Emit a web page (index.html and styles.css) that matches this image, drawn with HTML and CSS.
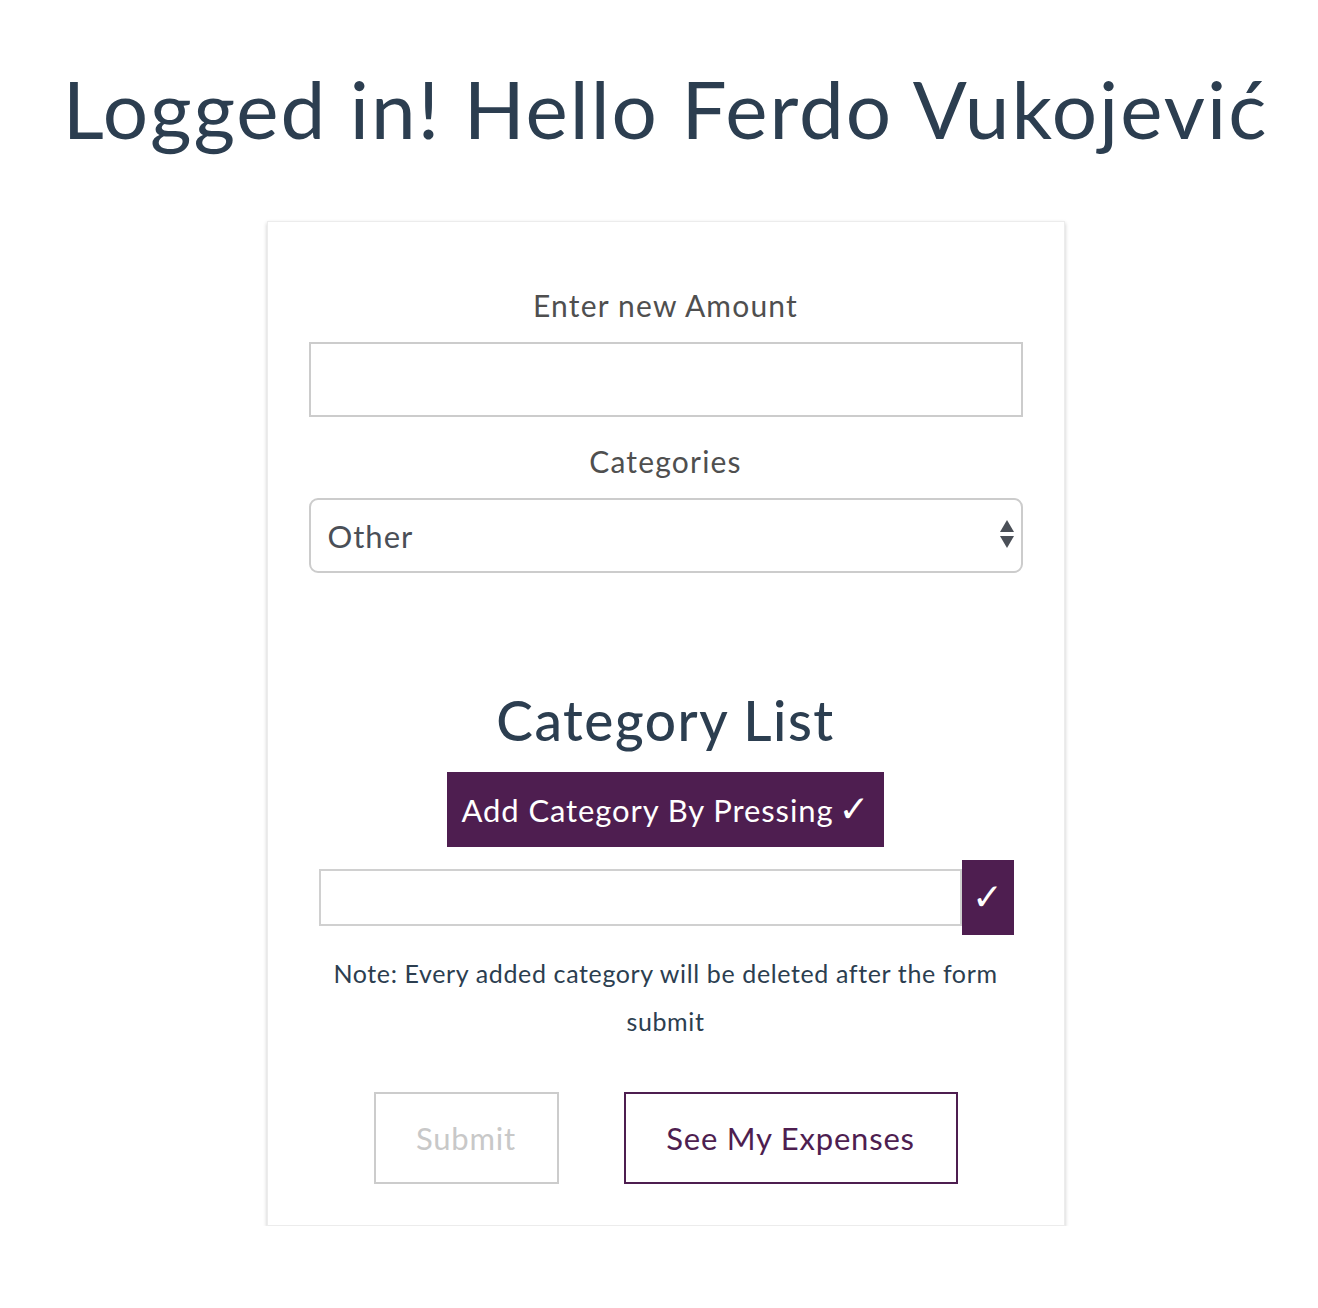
FILE: index.html
```html
<!DOCTYPE html>
<html lang="en">
<head>
<meta charset="utf-8">
<title>Expenses</title>
<link rel="stylesheet" href="styles.css">
</head>
<body>
<div class="page">
  <h1 class="title">Logged in! Hello Ferdo Vukojević</h1>
  <div class="card">
    <label class="label label-first" for="amount">Enter new Amount</label>
    <input class="field" id="amount" type="text">
    <label class="label" for="cat">Categories</label>
    <div class="select-wrap">
      <select class="select" id="cat">
        <option>Other</option>
      </select>
      <svg class="select-arrows" width="16" height="30" viewBox="0 0 16 30" aria-hidden="true">
        <polygon points="8,0 15,12 1,12" fill="#4a4f57"/>
        <polygon points="1,16 15,16 8,28" fill="#4a4f57"/>
      </svg>
    </div>
    <h2 class="list-title">Category List</h2>
    <div class="add-banner">Add Category By Pressing <span class="tick">✓</span></div>
    <div class="add-row">
      <input class="add-input" type="text">
      <button class="add-btn" type="button"><span class="tick">✓</span></button>
    </div>
    <p class="note">Note: Every added category will be deleted after the form submit</p>
    <div class="actions">
      <button class="btn btn-disabled" type="button" disabled>Submit</button>
      <button class="btn btn-primary" type="button">See My Expenses</button>
    </div>
  </div>
</div>
</body>
</html>
```

FILE: styles.css
```css
html, body {
  margin: 0;
  padding: 0;
  background: #fff;
}

body {
  font-family: Lato, "Open Sans", "Liberation Sans", sans-serif;
  color: #2c3e50;
}

.page {
  padding-left: 13px;
  display: flex;
  flex-direction: column;
  align-items: center;
}

.title {
  margin: 56px 0 0;
  font-size: 80px;
  line-height: 104px;
  font-weight: 400;
  letter-spacing: 2px;
  color: #2c3e50;
  white-space: nowrap;
}

.card {
  box-sizing: border-box;
  width: 798px;
  margin-top: 61px;
  padding: 40px 41px 41px;
  border: 1px solid #ececec;
  box-shadow: 0 2px 4px rgba(0, 0, 0, 0.22);
  display: flex;
  flex-direction: column;
  align-items: stretch;
  text-align: center;
}

.label {
  display: block;
  font-size: 30px;
  line-height: 45px;
  letter-spacing: 1.2px;
  color: #4f4f4f;
  margin-top: 22px;
  margin-bottom: 14px;
}

.label-first {
  margin-top: 21px;
}

.field {
  box-sizing: border-box;
  height: 75px;
  width: 100%;
  border: 2px solid #cccccc;
  border-radius: 0;
  margin: 0;
  padding: 0 16px;
  font: inherit;
  font-size: 30px;
  outline: none;
}

.select-wrap {
  position: relative;
}

.select {
  box-sizing: border-box;
  display: block;
  width: 100%;
  height: 75px;
  margin: 0;
  padding: 0 17px;
  border: 2px solid #cccccc;
  border-radius: 9px;
  background: #fff;
  font-family: inherit;
  font-size: 31px;
  letter-spacing: 1px;
  color: #4a4f57;
  -webkit-appearance: none;
  appearance: none;
  outline: none;
}

.select-arrows {
  position: absolute;
  right: 8px;
  top: 22px;
  pointer-events: none;
}

.list-title {
  margin: 114px 0 0;
  font-size: 55px;
  line-height: 66px;
  font-weight: 500;
  letter-spacing: 1.5px;
  color: #2c3e50;
}

.add-banner {
  align-self: center;
  margin-top: 19px;
  height: 75px;
  padding: 0 15px;
  display: flex;
  align-items: center;
  gap: 5px;
  background: #4e1e50;
  color: #fff;
  font-size: 31px;
  letter-spacing: 0.9px;
}

.tick {
  font-family: "DejaVu Sans", sans-serif;
  font-weight: 700;
  font-size: 37px;
  line-height: 1;
  letter-spacing: 0;
}

.add-row {
  margin: 13px 9px 0 10px;
  display: flex;
  align-items: center;
}

.add-input {
  box-sizing: border-box;
  flex: 1;
  height: 57px;
  margin: 0;
  border: 2px solid #d0d0d0;
  border-radius: 0;
  padding: 0 10px;
  font: inherit;
  font-size: 26px;
  outline: none;
}

.add-btn {
  width: 52px;
  height: 75px;
  margin: 0;
  padding: 0;
  border: none;
  border-radius: 0;
  background: #4e1e50;
  color: #fff;
  font-family: inherit;
  font-size: 30px;
  cursor: pointer;
}

.note {
  margin: 14px 0 0;
  padding: 0 20px;
  font-size: 25px;
  line-height: 48px;
  letter-spacing: 0.63px;
  color: #2c3e50;
}

.actions {
  margin-top: 47px;
  display: flex;
  justify-content: center;
  gap: 65px;
}

.btn {
  box-sizing: border-box;
  height: 92px;
  padding: 0 20px;
  background: #fff;
  font-family: inherit;
  font-size: 31px;
  letter-spacing: 0.8px;
  border-radius: 0;
}

.btn-disabled {
  width: 185px;
  border: 2px solid #cccccc;
  color: #c8c8c8;
}

.btn-primary {
  width: 334px;
  border: 2px solid #4e1e50;
  color: #4e1e50;
  cursor: pointer;
}
```
